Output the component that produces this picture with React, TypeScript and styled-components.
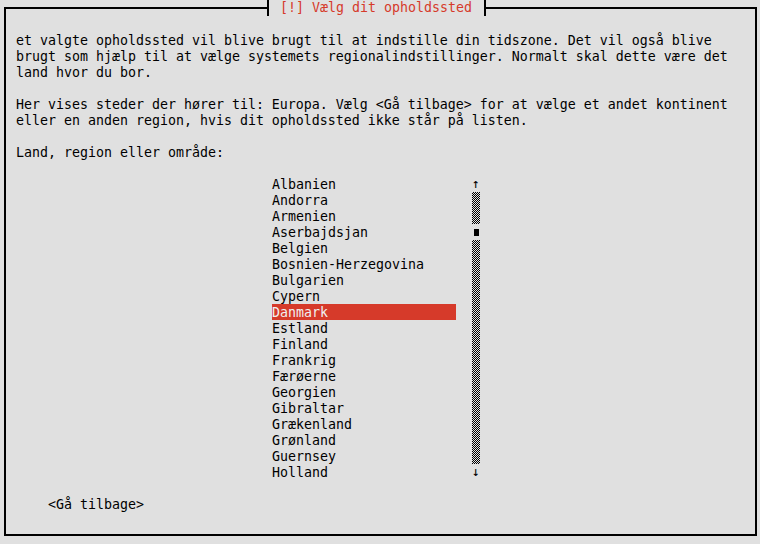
import React from "react";
import styled, { createGlobalStyle } from "styled-components";

const Global = createGlobalStyle`
  html, body { margin: 0; padding: 0; background: #e0e0e0; }
  body { font-family: "DejaVu Sans Mono", "Liberation Mono", monospace; }
`;

const Screen = styled.div`
  width: 760px;
  height: 544px;
  box-sizing: border-box;
  padding-top: 7px;
  background: #e0e0e0;
  overflow: hidden;
  font-family: "DejaVu Sans Mono", "Liberation Mono", monospace;
  font-size: 13.29px;
  line-height: 16px;
  color: #000;
`;

const Frame = styled.div`
  position: relative;
  margin-left: 4px;
  width: 753px;
  height: 529px;
  box-sizing: border-box;
  border: 2px solid #000;
  padding: 24px 0 0 10px;
`;

const Title = styled.div`
  position: absolute;
  top: -9px;
  left: 261px;
  width: 219px;
  height: 16px;
  box-sizing: border-box;
  border-left: 2px solid #000;
  border-right: 2px solid #000;
  background: #e0e0e0;
  padding-left: 11px;
  color: #d63a2a;
  white-space: pre;
`;

const Para = styled.div`
  white-space: pre;
  margin-bottom: 16px;
`;

const ListArea = styled.div`
  display: flex;
  gap: 16px;
  margin-left: 256px;
  margin-top: -1px;
  margin-bottom: 17px;
`;

const Items = styled.div`
  display: flex;
  flex-direction: column;
  width: 184px;
`;

const Item = styled.div<{ $selected?: boolean }>`
  height: 16px;
  box-sizing: border-box;
  padding-top: 1px;
  line-height: 16px;
  white-space: pre;
  background: ${(p) => (p.$selected ? "#d63a2a" : "transparent")};
  color: ${(p) => (p.$selected ? "#f0f0f0" : "#000")};
`;

const ScrollBar = styled.div`
  display: flex;
  flex-direction: column;
  width: 8px;
`;

const Arrow = styled.div`
  height: 16px;
  text-align: center;
  font-size: 13px;
  line-height: 16px;
`;

const Track = styled.div<{ $rows: number }>`
  height: ${(p) => p.$rows * 16}px;
  background: repeating-conic-gradient(#000 0 25%, transparent 0 50%) 0 0 / 2px 2px;
`;

const ThumbCell = styled.div`
  height: 16px;
  display: flex;
  align-items: center;
  justify-content: center;
`;

const Thumb = styled.div`
  width: 5px;
  height: 7px;
  background: #000;
`;

const BackButton = styled.div`
  margin-left: 32px;
  white-space: pre;
`;

const countries = [
  "Albanien",
  "Andorra",
  "Armenien",
  "Aserbajdsjan",
  "Belgien",
  "Bosnien-Herzegovina",
  "Bulgarien",
  "Cypern",
  "Danmark",
  "Estland",
  "Finland",
  "Frankrig",
  "Færøerne",
  "Georgien",
  "Gibraltar",
  "Grækenland",
  "Grønland",
  "Guernsey",
  "Holland",
];

export default function App() {
  return (
    <>
      <Global />
      <Screen>
        <Frame>
          <Title>[!] Vælg dit opholdssted</Title>
          <Para>
            {"et valgte opholdssted vil blive brugt til at indstille din tidszone. Det vil også blive\nbrugt som hjælp til at vælge systemets regionalindstillinger. Normalt skal dette være det\nland hvor du bor."}
          </Para>
          <Para>
            {"Her vises steder der hører til: Europa. Vælg <Gå tilbage> for at vælge et andet kontinent\neller en anden region, hvis dit opholdssted ikke står på listen."}
          </Para>
          <Para>Land, region eller område:</Para>
          <ListArea>
            <Items>
              {countries.map((c) => (
                <Item key={c} $selected={c === "Danmark"}>
                  {c}
                </Item>
              ))}
            </Items>
            <ScrollBar>
              <Arrow>↑</Arrow>
              <Track $rows={2} />
              <ThumbCell>
                <Thumb />
              </ThumbCell>
              <Track $rows={14} />
              <Arrow>↓</Arrow>
            </ScrollBar>
          </ListArea>
          <BackButton>{"<Gå tilbage>"}</BackButton>
        </Frame>
      </Screen>
    </>
  );
}
